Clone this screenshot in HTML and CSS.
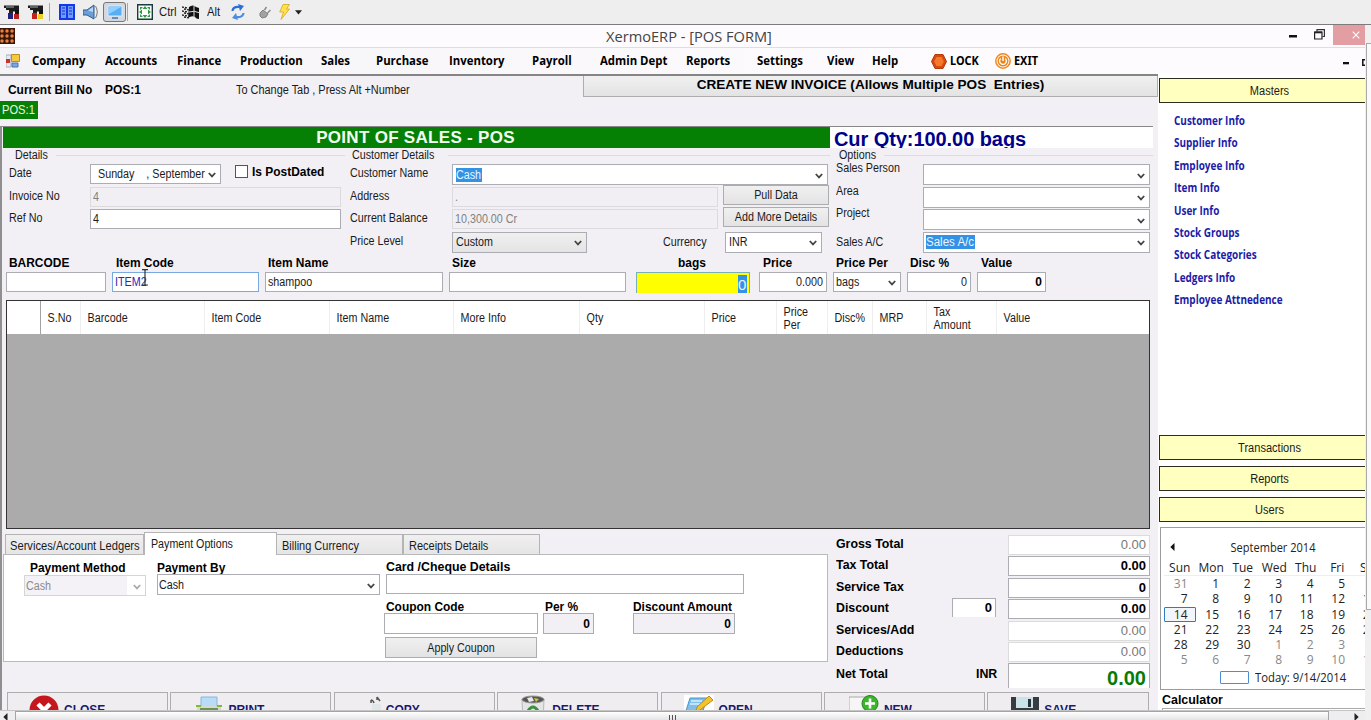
FILE: index.html
```html
<!DOCTYPE html>
<html lang="en">
<head>
<meta charset="utf-8">
<title>XermoERP - [POS FORM]</title>
<link rel="stylesheet" href="styles.css">
</head>
<body>
<svg class="defs" width="0" height="0">
  <symbol id="chev" viewBox="0 0 8 6"><path d="M.8 1 4 4.4 7.2 1" fill="none" stroke="currentColor" stroke-width="1.8"/></symbol>
</svg>

<header class="toolbar">
  <svg width="16" height="16" viewBox="0 0 16 16"><path d="M0 1.500h15v5h-3v1H5V6H2V4H0z" fill="#1c1c1c"/><path d="M2 3h8" stroke="#aaa"/><path d="M5 7h4v3H5z" fill="#222"/><path d="M4 9h5v6H4z" fill="#23237c"/><path d="M11 6h4v4h-4z" fill="#111"/><path d="M10 10h5v5h-5z" fill="#b8201c"/></svg>
  <svg width="16" height="16" viewBox="0 0 16 16"><path d="M0 1.500h15v5h-3v1H5V6H2V4H0z" fill="#1c1c1c"/><path d="M2 3h8" stroke="#aaa"/><path d="M5 7h4v3H5z" fill="#222"/><path d="M4 9h5v6H4z" fill="#c3231c"/><path d="M11 6h4v4h-4z" fill="#111"/><path d="M10 10h5v5h-5z" fill="#e9cf24"/></svg>
  <svg class="sep" width="16" height="16" viewBox="0 0 16 16"><path d="M0 0h16v16H0z" fill="#1438e8"/><path d="M2 2h5v12H2zM9 2h5v12H9z" fill="#6e9bff"/><path d="M3 4h3M3 7h3M3 10h3M10 4h3M10 7h3M10 10h3" stroke="#1230c0"/></svg>
  <svg width="16" height="16" viewBox="0 0 16 16"><path d="M0 6h4l7-5v14l-7-4H0z" fill="#6b9fd8" stroke="#2c5a94"/><path d="M5 6.500 10 3v5z" fill="#b6d7f5"/><path d="M12.500 2q3.500 6 0 12" fill="none" stroke="#777"/></svg>
  <span class="pressed"><svg width="16" height="15" viewBox="0 0 16 15"><path d="M1 1h14v10H1z" fill="#58aef4" stroke="#d8edff"/><path d="M2 2h12L2 9z" fill="#8fd0ff"/><path d="M5 12h6v2H5z" fill="#5f8fbd"/></svg></span>
  <svg width="16" height="16" viewBox="0 0 16 16"><path d="M.7.7h14.600v14.600H.7z" fill="#fff" stroke="#193a3e" stroke-width="1.400"/><path d="M8 2l2.500 3h-5zM8 14l2.500-3h-5zM2 8l3-2.500v5zM14 8l-3-2.500v5z" fill="#2f9b3c"/><path d="M3 3h3L3 6zM13 3v3l-3-3zM3 13v-3l3 3zM13 13h-3l3-3z" fill="#2f9b3c"/></svg>
  <span class="t key">Ctrl</span>
  <svg width="18" height="16" viewBox="0 0 18 16"><path d="M7 3q4-3 7 0l3 1v11q-3 0-4-2-3-2-7 1z" fill="#111"/><path d="M12 2v12M7 8q5-2 11 1" stroke="#ddd" fill="none"/><path d="M0 3l6 1M0 7l6 1M0 11l6 1M2 5l5 1M2 9l5 1M2 13l5 1" stroke="#222" stroke-width="1.300" stroke-dasharray="2 1"/></svg>
  <span class="t key">Alt</span>
  <svg width="14" height="16" viewBox="0 0 14 16"><path d="M1.500 7Q2 2.500 8 3" fill="none" stroke="#2b6fd6" stroke-width="2.200"/><path d="M7 0l6 2-4 5z" fill="#2b6fd6"/><path d="M12.500 9Q12 13.500 6 13" fill="none" stroke="#4a8ce4" stroke-width="2.200"/><path d="M7 16l-6-2 4-5z" fill="#4a8ce4"/></svg>
  <svg width="12" height="14" viewBox="0 0 12 14"><path d="M1 8l3-3 5 4-2 3-4 1-2-2z" fill="#a2a2a2" stroke="#808080"/><path d="M5.500 5l2-3M8.500 8l3-3" fill="none" stroke="#8c8c8c" stroke-width="1.500"/></svg>
  <svg width="11" height="16" viewBox="0 0 11 16"><path d="M4 .5h6.500L7.500 5h3L2 15.500 4.500 8H.7z" fill="#ffe14a" stroke="#d9a61e" stroke-width=".8"/></svg>
  <svg width="8" height="5" viewBox="0 0 8 5"><path d="M0 .3h7L3.500 4.500z" fill="#222"/></svg>
</header>

<div class="desk">
<main class="window">
  <div class="titlebar">
    <svg width="15" height="16" viewBox="0 0 15 16"><path d="M0 0h15v16H0z" fill="#3a160a"/><g fill="#e8813a"><circle cx="2" cy="3" r="1.700"/><circle cx="7" cy="3" r="1.700"/><circle cx="12" cy="3" r="1.700"/><circle cx="2" cy="8" r="1.700"/><circle cx="7" cy="8" r="1.700"/><circle cx="12" cy="8" r="1.700"/><circle cx="2" cy="13" r="1.700"/><circle cx="7" cy="13" r="1.700"/><circle cx="12" cy="13" r="1.700"/></g></svg>
    <span class="t caption">XermoERP - [POS FORM]</span>
    <svg class="min" width="8" height="3" viewBox="0 0 8 3"><path d="M0 0h8v2.500H0z" fill="#111"/></svg>
    <svg class="rest" width="11" height="11" viewBox="0 0 11 11"><path d="M3 2.500V.6h7.400V7.500H8.500" fill="none" stroke="#333" stroke-width="1.200"/><path d="M.6 3h7.400v7H.6z" fill="none" stroke="#222" stroke-width="1.200"/><path d="M.6 3.400H8" stroke="#222" stroke-width="1.800"/></svg>
    <span class="x"><svg width="8" height="8" viewBox="0 0 8 8"><path d="M.7.7l6.600 6.600M7.300.7.700 7.300" stroke="#fff" stroke-width="1.100"/></svg></span>
  </div>
  <nav class="menu">
    <svg width="14" height="14" viewBox="0 0 14 14"><path d="M0 1h5v12H0z" fill="#e9e9f2" stroke="#aab"/><path d="M0 5h4v4H0z" fill="#c8352c"/><path d="M5.500.500h8v7h-8z" fill="#f6c83e" stroke="#b78f25"/><path d="M6 9h6v4H6z" fill="#7ca6e0" stroke="#4a74b8"/></svg>
    <b class="t">Company</b><b class="t">Accounts</b><b class="t">Finance</b><b class="t">Production</b><b class="t">Sales</b><b class="t">Purchase</b><b class="t">Inventory</b><b class="t">Payroll</b><b class="t">Admin Dept</b><b class="t">Reports</b><b class="t">Settings</b><b class="t">View</b><b class="t">Help</b>
    <svg width="16" height="15" viewBox="0 0 16 15"><path d="M4 .5h8l3.500 7-3.500 7H4L.5 7.500z" fill="#d9480f" stroke="#b43a08"/><path d="M5.500 3h5l2.300 4.500-2.300 4.500h-5L3.200 7.500z" fill="#f47a2a"/></svg>
    <b class="t tah">LOCK</b>
    <svg width="16" height="16" viewBox="0 0 16 16"><circle cx="8" cy="8" r="7.200" fill="#fff" stroke="#ee8a1d" stroke-width="1.500"/><circle cx="8" cy="8" r="5.500" fill="#ef8519"/><path d="M5.700 5.500a3.400 3.400 0 1 0 4.600 0M8 3.500V8" fill="none" stroke="#fff" stroke-width="1.400"/></svg>
    <b class="t tah">EXIT</b>
    <svg class="low" width="6" height="3" viewBox="0 0 6 3"><path d="M0 0h6v2.300H0z" fill="#111"/></svg>
    <svg class="sq" width="3" height="7" viewBox="0 0 3 7"><path d="M3 .7H.8v5.600H3" fill="none" stroke="#111" stroke-width="1.500"/></svg>
  </nav>

  <div class="work">
    <section class="left">
      <div class="billrow">
        <b class="t">Current Bill No</b><b class="t">POS:1</b><span class="t">To Change Tab , Press Alt +Number</span>
        <button class="newinv"><b class="t c">CREATE NEW INVOICE (Allows Multiple POS&nbsp; Entries)</b></button>
      </div>
      <div class="postab"><span class="t">POS:1</span></div>

      <div class="form">
        <div class="banner"><b class="t c pos">POINT OF SALES - POS</b><b class="t qty">Cur Qty:100.00 bags</b></div>

        <div class="groups">
          <fieldset class="g1"><div class="legend"><span class="t">Details</span></div>
            <div class="rows">
              <span class="t">Date</span>
              <div class="dater"><div class="f combo"><span class="t">Sunday &nbsp;&nbsp; , September</span><svg><use href="#chev"/></svg></div><i class="check"></i><b class="t">Is PostDated</b></div>
              <span class="t">Invoice No</span><div class="f off"><span class="t">4</span></div>
              <span class="t">Ref No</span><div class="f"><span class="t">4</span></div>
            </div>
          </fieldset>
          <fieldset class="g2"><div class="legend"><span class="t">Customer Details</span></div>
            <div class="rows">
              <span class="t">Customer Name</span><div class="f combo"><mark><span class="t">Cash</span></mark><svg><use href="#chev"/></svg></div>
              <span class="t">Address</span><div class="pair"><div class="f off"><span class="t">.</span></div><button><span class="t c">Pull Data</span></button></div>
              <span class="t">Current Balance</span><div class="pair"><div class="f off"><span class="t">10,300.00 Cr</span></div><button><span class="t c">Add More Details</span></button></div>
              <span class="t">Price Level</span><div class="trio"><div class="f combo grey"><span class="t">Custom</span><svg><use href="#chev"/></svg></div><span class="t">Currency</span><div class="f combo"><span class="t">INR</span><svg><use href="#chev"/></svg></div></div>
            </div>
          </fieldset>
          <fieldset class="g3"><div class="legend"><span class="t">Options</span></div>
            <div class="rows">
              <span class="t up">Sales Person</span><div class="f combo"><span></span><svg><use href="#chev"/></svg></div>
              <span class="t up">Area</span><div class="f combo"><span></span><svg><use href="#chev"/></svg></div>
              <span class="t up">Project</span><div class="f combo"><span></span><svg><use href="#chev"/></svg></div>
              <span class="t">Sales A/C</span><div class="f combo"><mark><span class="t wide">Sales A/c</span></mark><svg><use href="#chev"/></svg></div>
            </div>
          </fieldset>
        </div>

        <div class="entrylabels"><b class="t">BARCODE</b><b class="t">Item Code</b><b class="t">Item Name</b><b class="t">Size</b><b class="t">bags</b><b class="t">Price</b><b class="t">Price Per</b><b class="t">Disc %</b><b class="t">Value</b></div>
        <div class="entry">
          <div class="f"></div>
          <div class="f focus"><span class="t">ITEM2</span><svg class="ibeam" width="8" height="17" viewBox="0 0 8 17"><path d="M1 .7h2.500l.5.800.500-.800H7M4 1v15M1 16h6" fill="none" stroke="#333" stroke-width="1.200"/></svg></div>
          <div class="f"><span class="t">shampoo</span></div><div class="f"></div>
          <div class="f yellow"><mark>0</mark></div>
          <div class="f num"><span class="t r">0.000</span></div>
          <div class="f combo"><span class="t">bags</span><svg><use href="#chev"/></svg></div>
          <div class="f num"><span class="t r">0</span></div><div class="f num"><b class="t r">0</b></div>
        </div>

        <div class="table">
          <div class="thead"><span></span><span class="t">S.No</span><span class="t">Barcode</span><span class="t">Item Code</span><span class="t">Item Name</span><span class="t">More Info</span><span class="t">Qty</span><span class="t">Price</span><span class="t">Price<br>Per</span><span class="t">Disc%</span><span class="t">MRP</span><span class="t">Tax<br>Amount</span><span class="t">Value</span></div>
        </div>

        <div class="lower">
          <div class="tabs">
            <div class="tabrow"><div><span class="t">Services/Account Ledgers</span></div><div class="on"><span class="t">Payment Options</span></div><div><span class="t">Billing Currency</span></div><div><span class="t">Receipts Details</span></div></div>
            <div class="pane">
              <div class="col1"><b class="t">Payment Method</b><div class="f combo dis"><span class="t">Cash</span><svg><use href="#chev"/></svg></div></div>
              <div class="col2"><b class="t">Payment By</b><div class="f combo"><span class="t">Cash</span><svg><use href="#chev"/></svg></div></div>
              <div class="col3"><b class="t">Card /Cheque Details</b><div class="f card"></div>
                <div class="cl"><b class="t">Coupon Code</b><b class="t">Per %</b><b class="t">Discount Amount</b></div>
                <div class="ci"><div class="f"></div><div class="f num lav"><b class="t r">0</b></div><div class="f num lav"><b class="t r">0</b></div></div>
                <button class="apply"><span class="t c">Apply Coupon</span></button>
              </div>
            </div>
          </div>
          <div class="totals">
            <b class="t">Gross Total</b><i></i><div class="f num pale"><span class="t r">0.00</span></div>
            <b class="t">Tax Total</b><i></i><div class="f num"><b class="t r">0.00</b></div>
            <b class="t">Service Tax</b><i></i><div class="f num"><b class="t r">0</b></div>
            <b class="t">Discount</b><div class="f num disc"><b class="t r">0</b></div><div class="f num"><b class="t r">0.00</b></div>
            <b class="t">Services/Add</b><i></i><div class="f num pale"><span class="t r">0.00</span></div>
            <b class="t">Deductions</b><i></i><div class="f num pale"><span class="t r">0.00</span></div>
            <b class="t nt">Net Total</b><b class="t inr">INR</b><div class="f num net"><b class="r">0.00</b></div>
          </div>
        </div>

        <div class="actions">
          <button><svg width="30" height="30" viewBox="0 0 30 30"><circle cx="15" cy="15" r="14.500" fill="#c4161c"/><path d="M9 9l12 12M21 9 9 21" stroke="#fff" stroke-width="4.500"/></svg><b class="t">CLOSE</b></button>
          <button><svg width="28" height="30" viewBox="0 0 28 30"><path d="M6 2h16v11H6z" fill="#b9dcf7" stroke="#8ab6dd"/><path d="M2 11h24v6H2z" fill="#d5d9d2"/><path d="M1 11h5M22 11h5" stroke="#7dbb3a" stroke-width="2"/><path d="M5 13h18v3H5z" fill="#6a9455"/></svg><b class="t">PRINT</b></button>
          <button><svg width="30" height="30" viewBox="0 0 30 30"><path d="M20 5q2 0 3 3M26 2l3 4M20 5v3M26 2v3" fill="none" stroke="#555" stroke-width="1.500"/><path d="M21 9h9v10h-9z" fill="#e2e6e8"/></svg><b class="t">COPY</b></button>
          <button><svg width="28" height="30" viewBox="0 0 28 30"><path d="M3 4h22l-1 24H4z" fill="#e4e6e6" stroke="#b6b6b6"/><ellipse cx="14" cy="4.500" rx="11" ry="3.500" fill="#555" stroke="#999"/><path d="M8 3l5-1 2 4-5 1z" fill="#e8e8e8"/><path d="M15 3l5 1-3 3z" fill="#d7c63a"/><path d="M9 16q5-8 10 0" fill="none" stroke="#3c8f3f" stroke-width="3"/></svg><b class="t">DELETE</b></button>
          <button><svg width="30" height="30" viewBox="0 0 30 30"><path d="M0 0h30v30H0z" fill="#fff"/><path d="M6 3h17l-5 16H1z" fill="#7fc0ea" stroke="#4b93c9"/><path d="M7 6h11M6 9h10" stroke="#d8f0ff" stroke-width="1.500"/><path d="M25 1l4 4-13 10-4 1 1-4z" fill="#f2c32c" stroke="#c08a12"/></svg><b class="t">OPEN</b></button>
          <button><svg width="30" height="30" viewBox="0 0 30 30"><path d="M0 30V2h22" fill="#f6f6f6" stroke="#aaa"/><circle cx="21" cy="8.500" r="8" fill="#3cb62c" stroke="#23821c"/><path d="M21 3.500v10M16 8.500h10" stroke="#fff" stroke-width="2.600"/></svg><b class="t">NEW</b></button>
          <button><svg width="28" height="30" viewBox="0 0 28 30"><path d="M0 2h28v28H3l-3-3z" fill="#363c42"/><path d="M5 2h17v11H5z" fill="#c9e3e9"/><path d="M17 4h3v8h-3z" fill="#26343a"/></svg><b class="t">SAVE</b></button>
        </div>
      </div>
    </section>

    <aside class="side">
      <div class="bar"><span class="t c">Masters</span></div>
      <div class="links"><b class="t">Customer Info</b><b class="t">Supplier Info</b><b class="t">Employee Info</b><b class="t">Item Info</b><b class="t">User Info</b><b class="t">Stock Groups</b><b class="t">Stock Categories</b><b class="t">Ledgers Info</b><b class="t">Employee Attnedence</b></div>
      <div class="bar"><span class="t c">Transactions</span></div>
      <div class="bar"><span class="t c">Reports</span></div>
      <div class="bar"><span class="t c">Users</span></div>
      <div class="cal">
        <div class="calhead"><svg width="5" height="8" viewBox="0 0 5 8"><path d="M4.500 0v8L.300 4z" fill="#111"/></svg><span class="t c">September 2014</span></div>
        <div class="days dn"><span>Sun</span><span>Mon</span><span>Tue</span><span>Wed</span><span>Thu</span><span>Fri</span><span>Sat</span></div>
        <div class="days dd"><i>31</i><span>1</span><span>2</span><span>3</span><span>4</span><span>5</span><span>6</span><span>7</span><span>8</span><span>9</span><span>10</span><span>11</span><span>12</span><span>13</span><span class="today">14</span><span>15</span><span>16</span><span>17</span><span>18</span><span>19</span><span>20</span><span>21</span><span>22</span><span>23</span><span>24</span><span>25</span><span>26</span><span>27</span><span>28</span><span>29</span><span>30</span><i>1</i><i>2</i><i>3</i><i>4</i><i>5</i><i>6</i><i>7</i><i>8</i><i>9</i><i>10</i><i>11</i></div>
        <div class="calfoot"><i></i><span class="t">Today: 9/14/2014</span></div>
      </div>
      <b class="t calc">Calculator</b>
      <div class="calcbox"></div>
    </aside>
  </div>

  <div class="hscroll"><svg width="5" height="8" viewBox="0 0 5 8"><path d="M4.500 0v8L.300 4z" fill="#222"/></svg><div class="thumb"><i></i><i></i><i></i></div><svg width="5" height="8" viewBox="0 0 5 8"><path d="M.5 0v8L4.700 4z" fill="#222"/></svg></div>
</main>
<div class="vscroll"><div></div></div>
</div>
</body>
</html>
```

FILE: styles.css
```css
* { box-sizing: border-box; }
body { margin: 0; width: 1371px; height: 720px; overflow: hidden; display: flex; flex-direction: column; background: #f2f0f3; color: #1a1a1a; font: 12px/14px "Liberation Sans", Arial, sans-serif; }
.defs { position: absolute; }
svg { display: block; flex: none; }
i { font-style: normal; }
button { font: inherit; color: inherit; padding: 0; border: 1px solid #adadad; background: linear-gradient(#f1f0f1, #e3e3e4); border-radius: 0; }

/* condensed UI text */
.t { display: block; white-space: nowrap; transform: scaleX(.895); transform-origin: left; }
b.t { transform: scaleX(.995); color: #000; }
.t.c { transform-origin: center; text-align: center; }
.t.r { transform-origin: right; text-align: right; }

.toolbar { height: 25px; flex: none; background: #eeeeee; border-bottom: 1.500px solid #7c7c7c; display: grid; grid-template-columns: 24px 31px 24px 20px 34px 22px 23px 25px 24px 28px 20px 16px 10px; padding-left: 4px; align-items: center; }
.toolbar > svg:nth-child(2) { width: 23px; padding-right: 7px; }
.toolbar > svg:nth-child(2) { width: 16px; padding: 0; }
.sep { box-shadow: -9px 0 0 -0.500px #eeeeee, -10px 0 0 -0.500px #a0a0a0; }
.toolbar > svg:first-child, .toolbar > svg:nth-child(2) { position: relative; z-index: 1; }
.toolbar > .sep { position: relative; box-shadow: none; }
.pressed { width: 23px; height: 20px; border: 1.500px solid #777; border-radius: 3px; background: #d4d8de; display: grid; place-items: center; }
.toolbar { background: linear-gradient(#a8a8a8, #a8a8a8) 49px 3px / 1px 18px no-repeat, linear-gradient(#a8a8a8, #a8a8a8) 127px 3px / 1px 18px no-repeat, #eeeeee; }
.key { font-size: 13px; line-height: 22px; transform: scaleX(.87); }

.desk { flex: 1; display: flex; min-height: 0; }
.window { width: 1365px; display: flex; flex-direction: column; overflow: hidden; }
.vscroll { width: 6px; padding-top: 18px; background: #f0f0f0; }
.vscroll div { margin-left: 1px; height: 567px; border: 1px solid #aaa; border-right: 0; background: #fafafa; }

.titlebar { height: 23px; flex: none; background: #fdfbfe; border-bottom: 1px solid #dedede; display: grid; grid-template-columns: 606px 683px 25px 19px 32px; align-items: center; }
.caption { font: 15px/20px "Open Sans", sans-serif; color: #444; transform: scaleX(.975); }
.rest { margin-top: -4px; }
.x { width: 32px; height: 20px; background: #e29ea2; align-self: start; display: flex; align-items: center; padding-left: 19px; }

.menu { height: 26px; flex: none; background: linear-gradient(90deg, #f4f3f5, #fdfbfe 70%); display: grid; grid-template-columns: 26px 73px 72px 63px 81px 55px 73px 83px 68px 86px 71px 70px 45px 59px 19px 45px 19px 329px 19px 4px; padding-left: 6px; align-items: center; }
.menu .t { font: 700 12.500px/18px "Open Sans", sans-serif; transform: scaleX(.91); margin-top: -1px; }
.menu .tah { font: 700 12px/18px "Noto Sans", sans-serif; transform: scaleX(.91); }
.low { margin-top: 5px; }
.sq { margin-top: 2px; }

.work { flex: 1; min-height: 0; display: flex; }
.left { width: 1158px; display: flex; flex-direction: column; border-top: 2px solid #858585; background: #f2f0f4; }
.billrow { height: 25px; flex: none; display: grid; grid-template-columns: 97px 131px 347px 575px; padding-left: 8px; align-items: center; }
.billrow > .t { margin-top: 2px; }
.billrow > span.t { transform: scaleX(.91); }
.newinv { height: 21px; align-self: start; border-top: 0; }
.newinv b.t { font-size: 13px; transform: scaleX(1.045); margin-top: -2px; }
.postab { width: 38px; height: 18px; flex: none; margin-bottom: 7px; background: #078007; color: #e8f7e8; padding: 2px 0 0 2px; }
.postab .t { transform: scaleX(.93); }

.form { flex: 1; min-height: 0; width: 1153px; border-top: 1px solid #888; border-left: 2px solid #8f8f8f; padding-left: 1px; overflow: hidden; }
.banner { height: 21px; display: flex; }
.pos { width: 827px; background: #058005; font-size: 17px; line-height: 22px; padding-right: 2px; letter-spacing: .3px; }
.banner b.pos { color: #f2fff2; transform: none; }
.banner b.qty { flex: 1; background: #fff; color: #00008b; font-size: 20px; line-height: 24px; padding-left: 4px; transform: none; overflow: hidden; letter-spacing: -.07px; }

.groups { display: flex; height: 107px; }
fieldset { margin: 0; padding: 0; border: 0; min-width: 0; }
.legend { height: 14px; display: flex; gap: 4px; }
.legend::after { content: ""; flex: 1; border-top: 1px solid #dcdbde; margin-top: 7px; }
.g1 { width: 342px; } .g2 { width: 485px; } .g3 { width: 323px; }
.g1 .legend { padding-left: 12px; } .g2 .legend { padding-left: 7px; } .g3 .legend { padding-left: 9px; }
.rows { display: grid; grid-template-rows: 22px 22px 22px 21px; margin-top: 2px; row-gap: .500px; }
.g1 .rows { grid-template-columns: 81px 251px; padding-left: 6px; }
.g2 .rows { grid-template-columns: 102px 378px; padding-left: 5px; }
.g3 .rows { grid-template-columns: 87px 227px; padding-left: 6px; }
.rows > .t { line-height: 19px; }
.rows > .t.up { line-height: 8px; }
.g3 .rows > .t:last-of-type { line-height: 20px; }

.f { height: 20px; background: #fff; border: 1px solid #abadb3; display: flex; align-items: center; padding-left: 2px; min-width: 0; position: relative; }
.f > .t { flex: 1; min-width: 0; }
.combo { height: 21px; padding-left: 3px; color: #1a1a1a; }
.combo svg { width: 8px; height: 6px; margin: 2px 4px 0 auto; color: #444; }
.off { background: #f1eff3; border-color: #dcdadd; color: #808080; }
mark { background: #3392e6; color: #e8f6ff; line-height: 14px; width: 26px; height: 14px; }
.g3 mark { width: 49px; margin-left: -1px; }
mark .t.wide { transform: scaleX(.96); }
.dater { display: grid; grid-template-columns: 131px 14px 13px 4px 1fr; }
.dater .combo { padding-left: 7px; height: 20px; }
.check { grid-column: 3; width: 13px; height: 13px; border: 1px solid #555; background: #fff; margin-top: 1px; }
.dater b { grid-column: 5; line-height: 16px; }
.g2 .rows > .f { width: 376px; }
.pair { display: grid; grid-template-columns: 266px 106px; column-gap: 5px; }
.pair button { height: 20px; margin-top: -2px; }
.trio { display: grid; grid-template-columns: 211px 62px 97px; }
.trio .f:first-child { width: 135px; }
.trio .t { line-height: 20px; }
.grey { background: linear-gradient(#f0f0f0, #e4e4e4); }

.entrylabels { height: 17px; display: grid; grid-template-columns: 107px 152px 184px 226px 85px 73px 74px 71px 1fr; padding-left: 6px; line-height: 16px; }
.entry { height: 28px; display: grid; grid-template-columns: 100px 147px 178px 177px 114px 68px 68px 64px 69px; padding-left: 3px; column-gap: 6px; }
.entry > :nth-child(5) { margin-left: 4px; }
.entry > :nth-child(n+6) { position: relative; left: 4px; }
.entry > :nth-child(5) { margin-right: -4px; }
.entry > :nth-child(n+6) { left: 7px; }
.entry .combo { height: 20px; padding-left: 2px; }
.focus { border-color: #79a9e0; color: #2f23b8; }
.ibeam { position: absolute; left: 28px; top: -4px; }
.num { padding: 0 3px; }
.yellow { height: 21px; background: #ff0; border-color: #79b0b8; border-bottom: 0; justify-content: flex-end; padding-right: 2px; }
.yellow mark { width: 9px; height: 18px; font-size: 15px; line-height: 19px; margin-top: 2px; }

.table { margin-left: 3px; width: 1144px; height: 229px; border: 1.500px solid #333; background: #ababab; }
.thead { height: 33px; background: #fff; display: grid; grid-template-columns: 33px 40px 124px 125px 124px 126px 125px 72px 51px 45px 54px 70px 1fr; align-items: center; line-height: 13px; }
.thead .t { padding-left: 7.500px; border-left: 1px solid #ececec; height: 33px; display: flex; align-items: center; padding-top: 2px; }
.thead .t:nth-child(2) { border-left-color: #999; }

.lower { display: flex; height: 163px; padding-top: 3px; }
.tabs { width: 825px; }
.tabrow { height: 22px; display: flex; align-items: flex-end; padding-left: 2px; }
.tabrow div { height: 20px; border: 1px solid #b4b4b4; border-bottom: 0; background: linear-gradient(#f1f0f1, #e5e5e6); padding: 4px 0 0 5px; width: 137px; }
.tabrow .t { transform: scaleX(.915); }
.tabrow div:first-child { width: 139px; padding-left: 4px; }
.tabrow div:first-child .t { transform: scaleX(.93); }
.tabrow div:nth-child(3) { width: 126px; }
.tabrow .on { height: 23px; width: 133px; background: #fff; padding-left: 6px; margin-bottom: -1px; }
.tabrow .on .t { transform: scaleX(.89); }
.tabrow .on + div { border-left: 0; }
.pane { height: 108px; border: 1px solid #b9b9bc; background: #fff; display: flex; }
.col1 { width: 122px; margin-left: 20px; padding-top: 6px; }
.col1 > .t { margin-left: 6px; }
.col1 > .f { width: 122px; }
.col1 .f .t { margin-left: -2px; }
.dis { border-color: #d5d5d5; color: #8b8b8b; background: linear-gradient(90deg, #f4f2f6 85%, #fff 85%); }
.dis svg { color: #aaa; }
.col2 { width: 223px; margin-left: 11px; padding-top: 6px; }
.col2 > .f { margin-top: -1px; }
.col2 .f .t { margin-left: -2px; }
.col3 { margin-left: 4px; padding-top: 4px; }
.col3 > .t { margin-left: 2px; height: 15px; line-height: 16px; transform: scaleX(1.03); }
.card { width: 358px; margin-left: 2px; }
.cl { display: grid; grid-template-columns: 159px 88px 1fr; margin: 5px 0 0 2px; height: 14px; line-height: 16px; }
.ci { display: grid; grid-template-columns: 154px 51px 141px; column-gap: 5px; }
.ci > :last-child { margin-left: 34px; width: 102px; }
.ci .f { height: 21px; }
.lav { background: #f3f0f5; }
.apply { display: block; width: 152px; height: 21px; margin: 3px 0 0 1px; }

.totals { display: grid; grid-template-columns: 116px 56px 142px; grid-template-rows: repeat(6, 21.400px) 26px; padding: 3px 0 0 8px; width: 323px; }
.totals > .t { line-height: 18px; transform: scaleX(1.03); }
.totals .disc { width: 44px; height: 19px; border-bottom: 0; margin-top: -1px; }
.totals .f .t { font-size: 13px; transform: scaleX(1); }
.totals > .inr { margin-left: 24px; line-height: 22px; }
.totals > .nt { line-height: 22px; }
.pale { border-color: #dcdcdc; color: #777; }
.net { height: 25px; border-bottom: 0; font-size: 20px; color: #077a07; justify-content: flex-end; }
.net .r { padding-top: 3px; }

.actions { display: grid; grid-template-columns: repeat(6, 161px) 162px; column-gap: 2.400px; padding-left: 4px; height: 18px; overflow: hidden; }
.actions button { height: 40px; display: flex; align-items: flex-start; padding: 2px 0 0 21px; background: #efedf0; }
.actions svg { margin-right: 5px; }
.actions b.t { color: #191970; font-size: 12px; line-height: 16px; margin-top: 7px; transform: scaleX(1); }
.actions button:nth-child(2) { padding-left: 24px; }
.actions button:nth-child(3) { padding-left: 16px; }
.actions button:nth-child(4) { padding-left: 21px; }
.actions button:nth-child(5) { padding-left: 22px; }
.actions button:nth-child(6) { padding-left: 24px; }
.actions button:nth-child(7) { padding-left: 23px; }

.side { width: 207px; background: #fff; padding: 4px 0 0 1px; overflow: hidden; }
.bar { height: 25px; border: 1.500px solid #2c2c20; border-right: 0; background: #ffffc0; margin-bottom: 6px; padding: 5px 0 0 14px; }
.bar .t { transform: scaleX(.92); }
.links { height: 326px; padding: 1px 0 0 15px; }
.links .t { font: 700 12px/22.400px "Open Sans", sans-serif; color: #1c1ca8; transform: scaleX(.83); }
.cal { height: 163px; margin: -1px 0 0 1px; border: 1px solid #9c9c9c; border-right: 0; font: 12px/15px "Open Sans", sans-serif; color: #222; overflow: hidden; }
.calhead { display: grid; grid-template-columns: 5px 1fr; padding: 11px 0 0 15px; align-items: center; height: 27px; }
.calhead svg { margin-left: -6px; }
.calhead .t { transform: scaleX(.92); }
.days { display: grid; grid-template-columns: repeat(7, 31.500px); grid-auto-rows: 15.300px; margin-left: 3px; }
.dn { text-align: center; margin-top: 5px; height: 16px; border-bottom: 1px solid #eee; }
.dd { text-align: right; margin-top: 0; }
.dd > * { padding-right: 8px; }
.dd i { color: #888; }
.dd .today { border: 1px solid #2a7cc8; background: #f2f6fa; line-height: 13px; padding-right: 7px; border-radius: 1px; }
.calfoot { display: flex; gap: 6px; align-items: center; padding-left: 59px; height: 17px; margin-top: 1px; }
.calfoot i { width: 29px; height: 13px; border: 1px solid #4b8fd0; border-radius: 1px; }
.calfoot .t { transform: scaleX(.94); }
.side .calc { margin: 3px 0 0 3px; font-size: 12.500px; }
.calcbox { height: 10px; margin: 1px 0 0 3px; border: 1px solid #aaa; border-right: 0; }

.hscroll { height: 10px; flex: none; background: #eeedef; border-top: 1px solid #c5c5c5; display: grid; grid-template-columns: 15px 1314px 24px 1fr; align-items: start; }
.hscroll > svg { margin: 2px 0 0 3px; }
.hscroll > svg:last-child { grid-column: 4; margin-left: 1px; }
.thumb { height: 12px; border: 1px solid #a4a4a4; background: linear-gradient(#fff, #dcdcdf); display: flex; justify-content: center; gap: 2px; padding-top: 3px; }
.thumb i { width: 1px; height: 6px; background: #555; }
```
